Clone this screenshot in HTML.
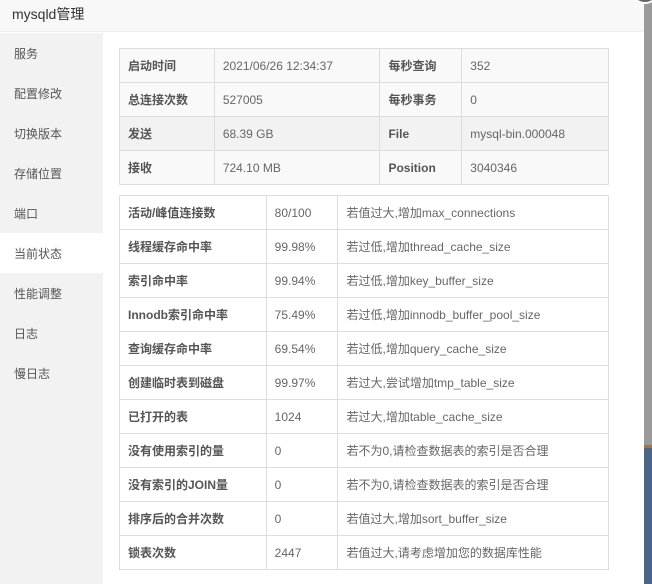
<!DOCTYPE html>
<html><head><meta charset="utf-8"><style>
*{margin:0;padding:0;box-sizing:border-box}
body{width:652px;height:584px;overflow:hidden;position:relative;background:#fff;font-family:"Liberation Sans","Noto Sans CJK SC",sans-serif;font-size:12px;color:#666}
.hdr{position:absolute;left:0;top:0;width:644px;height:32px;background:#f8f8f8;border-bottom:1px solid #eee;font-size:14px;color:#333;line-height:28px;padding-left:12px}
.side{position:absolute;left:0;top:33px;width:103px;height:551px;background:#f2f2f2}
.side div{height:40px;line-height:42px;padding-left:14px;font-size:12px;color:#555}
.side div.on{background:#fff}
.rs{position:absolute;left:644px;top:0;width:8px;height:584px;background:#9a9a9a}
.rs2{position:absolute;left:644px;top:445px;width:8px;height:139px;background:#4a6585;border-top:3px solid #a8742e}
.cl{position:absolute;left:632px;top:-18px;width:26px;height:22px;border-radius:50%;background:#666;border:2px solid #fff}
table{position:absolute;border-collapse:collapse;left:119px;width:490px}
td{border:1px solid #ddd;height:34px;padding-left:8px;white-space:nowrap}
td.b{font-weight:bold;color:#555}
.t1 td{background:#f9f9f9}
.t1 tr.d td{background:#f2f2f2}
</style></head><body>
<div class="hdr">mysqld管理</div>
<div class="side"><div>服务</div><div>配置修改</div><div>切换版本</div><div>存储位置</div><div>端口</div><div class="on">当前状态</div><div>性能调整</div><div>日志</div><div>慢日志</div></div>
<table class="t1" style="top:48px">
<colgroup><col style="width:95px"><col style="width:166px"><col style="width:82px"><col style="width:147px"></colgroup>
<tr><td class="b">启动时间</td><td>2021/06/26 12:34:37</td><td class="b">每秒查询</td><td>352</td></tr>
<tr><td class="b">总连接次数</td><td>527005</td><td class="b">每秒事务</td><td>0</td></tr>
<tr class="d"><td class="b">发送</td><td>68.39 GB</td><td class="b">File</td><td>mysql-bin.000048</td></tr>
<tr><td class="b">接收</td><td>724.10 MB</td><td class="b">Position</td><td>3040346</td></tr>
</table>
<table style="top:195px">
<colgroup><col style="width:147px"><col style="width:72px"><col style="width:271px"></colgroup>
<tr><td class="b">活动/峰值连接数</td><td>80/100</td><td>若值过大,增加max_connections</td></tr>
<tr><td class="b">线程缓存命中率</td><td>99.98%</td><td>若过低,增加thread_cache_size</td></tr>
<tr><td class="b">索引命中率</td><td>99.94%</td><td>若过低,增加key_buffer_size</td></tr>
<tr><td class="b">Innodb索引命中率</td><td>75.49%</td><td>若过低,增加innodb_buffer_pool_size</td></tr>
<tr><td class="b">查询缓存命中率</td><td>69.54%</td><td>若过低,增加query_cache_size</td></tr>
<tr><td class="b">创建临时表到磁盘</td><td>99.97%</td><td>若过大,尝试增加tmp_table_size</td></tr>
<tr><td class="b">已打开的表</td><td>1024</td><td>若过大,增加table_cache_size</td></tr>
<tr><td class="b">没有使用索引的量</td><td>0</td><td>若不为0,请检查数据表的索引是否合理</td></tr>
<tr><td class="b">没有索引的JOIN量</td><td>0</td><td>若不为0,请检查数据表的索引是否合理</td></tr>
<tr><td class="b">排序后的合并次数</td><td>0</td><td>若值过大,增加sort_buffer_size</td></tr>
<tr><td class="b">锁表次数</td><td>2447</td><td>若值过大,请考虑增加您的数据库性能</td></tr>
</table>
<div class="rs"></div><div class="rs2"></div><div class="cl"></div>
</body></html>
